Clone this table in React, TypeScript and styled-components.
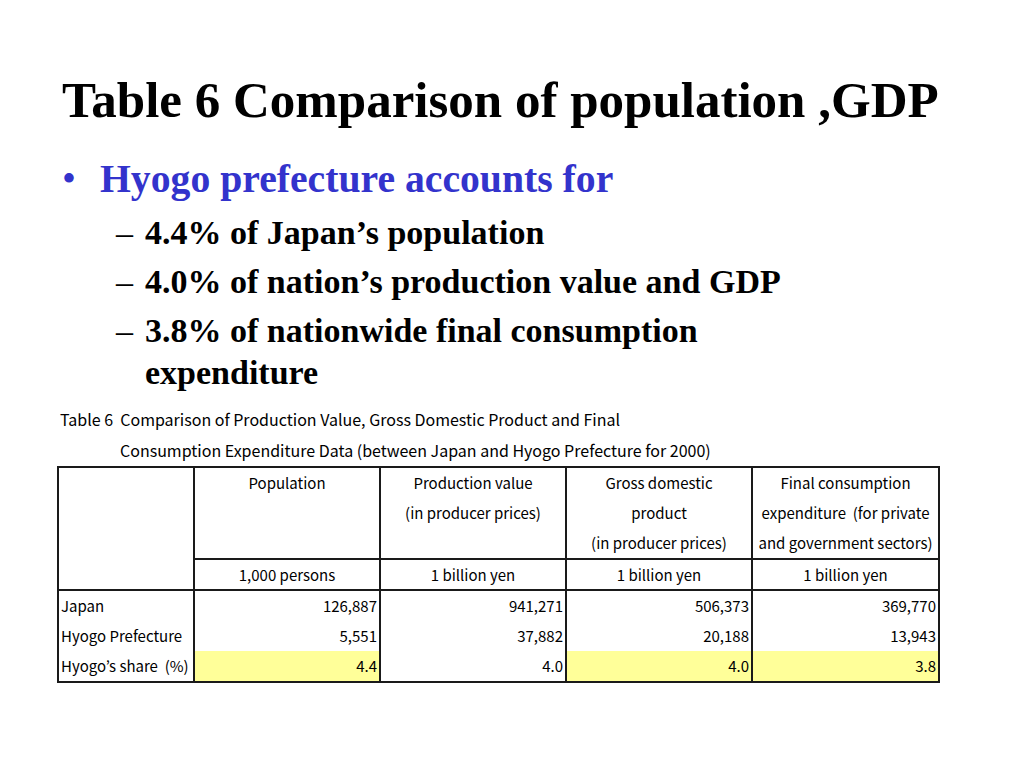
import React from 'react';
import styled, { createGlobalStyle } from 'styled-components';

const Global = createGlobalStyle`
  html, body { margin: 0; padding: 0; background: #ffffff; }
  body { width: 1024px; height: 768px; overflow: hidden; }
`;

const Slide = styled.main`
  width: 1024px;
  height: 768px;
  box-sizing: border-box;
  padding-top: 70px;
  display: flex;
  flex-direction: column;
  font-family: "Liberation Serif", "Times New Roman", serif;
  color: #000;
`;

const Title = styled.h1`
  margin: 0 0 0 62px;
  font-size: 51px;
  line-height: 60px;
  font-weight: 700;
  white-space: nowrap;
`;

const BulletList = styled.ul`
  list-style: none;
  margin: 25px 0 0 0;
  padding: 0;
`;

const Bullet = styled.li`
  display: flex;
  margin-left: 62px;
  font-size: 39.7px;
  line-height: 48px;
  font-weight: 700;
  color: #3333cc;
`;

const Marker = styled.span<{ $w: number }>`
  flex: 0 0 ${p => p.$w}px;
  font-weight: 400;
`;

const SubList = styled.ul`
  list-style: none;
  margin: 9px 0 0 116px;
  padding: 0;
  width: 600px;
`;

const SubItem = styled.li`
  display: flex;
  font-size: 34px;
  line-height: 42px;
  font-weight: 700;
  color: #000;
  & + & { margin-top: 7px; }
`;

const SubText = styled.span<{ $nowrap?: boolean }>`
  white-space: ${p => (p.$nowrap ? 'nowrap' : 'normal')};
`;

const Caption = styled.div`
  margin: 10px 0 0 60px;
  font-family: "Noto Sans CJK JP", "DejaVu Sans", sans-serif;
  font-size: 16px;
  line-height: 31px;
  color: #000;
  white-space: pre;
`;

const CaptionLine = styled.div<{ $indent?: number }>`
  padding-left: ${p => p.$indent ?? 0}px;
`;

const DataTable = styled.table`
  margin: 0 0 0 57px;
  width: 881px;
  border-collapse: collapse;
  table-layout: fixed;
  font-family: "Noto Sans CJK JP", "DejaVu Sans", sans-serif;
  font-size: 15px;
  color: #000;
`;

const Cell = styled.td<{ $align?: 'left' | 'right' | 'center'; $hl?: boolean; $edge?: 'top' | 'bottom' | 'mid' }>`
  border-left: 2px solid #1a1a1a;
  border-right: 2px solid #1a1a1a;
  border-top: ${p => (p.$edge === 'top' ? '2px solid #1a1a1a' : 'none')};
  border-bottom: ${p => (p.$edge === 'bottom' ? '2px solid #1a1a1a' : 'none')};
  padding: 0 2px;
  height: 30px;
  line-height: 30px;
  text-align: ${p => p.$align ?? 'left'};
  background: ${p => (p.$hl ? '#ffff99' : 'transparent')};
  white-space: pre;
  vertical-align: middle;
`;

const HeadCell = styled.th`
  border: 2px solid #1a1a1a;
  padding: 0;
  height: 88px;
  font-weight: 400;
  text-align: center;
  vertical-align: top;
  line-height: 30px;
  white-space: pre;
`;

const UnitCell = styled.td`
  border: 2px solid #1a1a1a;
  padding: 0;
  height: 29px;
  line-height: 29px;
  text-align: center;
  white-space: nowrap;
`;

const columns = [
  { lines: ['Population'], unit: '1,000 persons' },
  { lines: ['Production value', '(in producer prices)'], unit: '1 billion yen' },
  { lines: ['Gross domestic', 'product', '(in producer prices)'], unit: '1 billion yen' },
  { lines: ['Final consumption', 'expenditure  (for private', 'and government sectors)'], unit: '1 billion yen' },
];

const rows = [
  { label: 'Japan', values: ['126,887', '941,271', '506,373', '369,770'], hl: [false, false, false, false], edge: 'top' as const },
  { label: 'Hyogo Prefecture', values: ['5,551', '37,882', '20,188', '13,943'], hl: [false, false, false, false], edge: 'mid' as const },
  { label: 'Hyogo’s share  (%)', values: ['4.4', '4.0', '4.0', '3.8'], hl: [true, false, true, true], edge: 'bottom' as const },
];

export default function App() {
  return (
    <>
      <Global />
      <Slide>
        <Title>Table 6 Comparison of population ,GDP</Title>
        <BulletList>
          <Bullet>
            <Marker $w={38}>•</Marker>
            <span>Hyogo prefecture accounts for</span>
          </Bullet>
        </BulletList>
        <SubList>
          <SubItem>
            <Marker $w={29}>–</Marker>
            <SubText>4.4% of Japan’s population</SubText>
          </SubItem>
          <SubItem>
            <Marker $w={29}>–</Marker>
            <SubText $nowrap>4.0% of nation’s production value and GDP</SubText>
          </SubItem>
          <SubItem>
            <Marker $w={29}>–</Marker>
            <SubText>3.8% of nationwide final consumption expenditure</SubText>
          </SubItem>
        </SubList>
        <Caption>
          <CaptionLine>Table 6  Comparison of Production Value, Gross Domestic Product and Final</CaptionLine>
          <CaptionLine $indent={60}>Consumption Expenditure Data (between Japan and Hyogo Prefecture for 2000)</CaptionLine>
        </Caption>
        <DataTable>
          <colgroup>
            <col style={{ width: 136 }} />
            <col style={{ width: 186 }} />
            <col style={{ width: 186 }} />
            <col style={{ width: 186 }} />
            <col style={{ width: 187 }} />
          </colgroup>
          <thead>
            <tr>
              <HeadCell rowSpan={2} />
              {columns.map(c => (
                <HeadCell key={c.lines[0]}>
                  {c.lines.map(l => (
                    <div key={l}>{l}</div>
                  ))}
                </HeadCell>
              ))}
            </tr>
            <tr>
              {columns.map(c => (
                <UnitCell key={'u' + c.lines[0]}>{c.unit}</UnitCell>
              ))}
            </tr>
          </thead>
          <tbody>
            {rows.map(r => (
              <tr key={r.label}>
                <Cell $edge={r.edge}>{r.label}</Cell>
                {r.values.map((v, i) => (
                  <Cell key={i} $align="right" $hl={r.hl[i]} $edge={r.edge}>
                    {v}
                  </Cell>
                ))}
              </tr>
            ))}
          </tbody>
        </DataTable>
      </Slide>
    </>
  );
}
